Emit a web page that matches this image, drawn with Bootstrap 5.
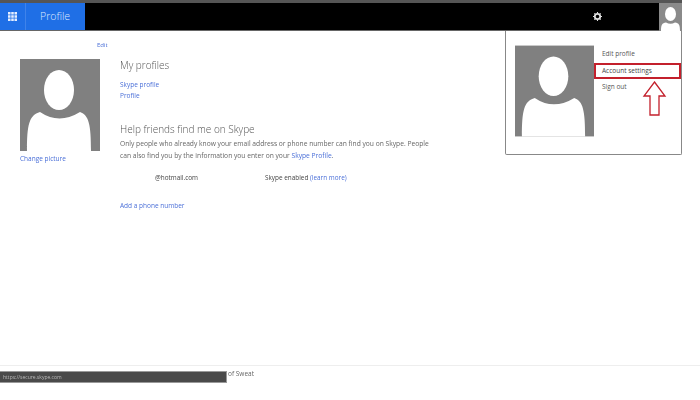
<!DOCTYPE html>
<html lang="en">

<head>
    <meta charset="UTF-8">
    <meta name="viewport" content="width=device-width, initial-scale=1.0">
    <title>Profile</title>
    <link href="https://cdn.jsdelivr.net/npm/bootstrap@5.3.3/dist/css/bootstrap.min.css" rel="stylesheet">
    <script src="https://cdn.jsdelivr.net/npm/bootstrap@5.3.3/dist/js/bootstrap.bundle.min.js"></script>
    <style>
        html, body { height: 100%; overflow: hidden; }
        body { font-family: "Open Sans", "Liberation Sans", sans-serif; background: #fff; }
        a { color: #4a6fd8; text-decoration: none; }

        #page { position: relative; width: 700px; height: 400px; filter: blur(.75px); }

        /* top bar */
        #topbar { width: 682px; height: 31px; background: #000; border-top: 3px solid #555; border-bottom: 1px solid #666; }
        #app-tile { width: 85px; background: #1f6fe6; color: #dfeaff; font-size: 10.5px; font-weight: 300; }
        #grid-btn { width: 26px; border-right: 1px solid #3f83ea; }
        #grid-icon { width: 9px; height: 9px; }
        #app-name { padding-left: 14px; }
        #gear-icon { width: 9px; height: 9px; margin-right: 57px; }
        #me-tile { width: 23px; height: 28px; background: #8a8a8a; }
        #me-tile svg { width: 23px; height: 28px; display: block; }

        /* page content */
        #content { padding: 10px 0 0 20px; }
        #left-col { width: 100px; flex: none; }
        #edit-link { display: block; font-size: 6px; line-height: 9px; margin-left: 77px; margin-bottom: 9px; }
        #big-avatar { width: 80px; height: 92px; display: block; }
        #change-pic { display: block; font-size: 6.5px; line-height: 10px; margin-top: 3px; }
        #right-col { padding-top: 17px; color: #555; width: 320px; }
        .sect-title { font-size: 10px; font-weight: 300; line-height: 15px; margin: 0; color: #555; }
        .side-link { display: block; font-size: 6.5px; line-height: 11px; }
        #links { margin-top: 6px; margin-bottom: 21px; }
        #help-text { font-size: 6.7px; line-height: 12px; margin: 1px 0 0; color: #666; width: 312px; }
        #contact-row { font-size: 6.4px; line-height: 10px; margin-top: 11px; padding-left: 35px; color: #444; }
        #contact-row span:first-child { width: 110px; }
        #add-phone { display: block; font-size: 6.5px; line-height: 10px; margin-top: 18px; }

        /* account menu */
        #acct-menu { position: absolute; left: 505px; top: 31px; width: 177px; height: 124px; background: #fff; border: 1px solid #888; border-top: 0; border-radius: 0 0 2px 2px; padding: 14px 0 0 9px; }
        #menu-avatar { width: 79px; height: 92px; flex: none; display: block; }
        .menu-line { font-size: 6.5px; line-height: 16px; padding-left: 8px; color: #555; }
        #menu-list { flex: 1; padding-top: 1px; }
        #menu-list .menu-line:first-child { height: 17px; }
        #acct-line { border: 2px solid #c3202c; line-height: 12px; padding-left: 6px; height: 16px; color: #444; }
        #red-arrow { position: absolute; left: 642px; top: 81px; width: 25px; height: 36px; }

        /* footer */
        #foot-line { position: absolute; left: 0; right: 0; top: 365px; border-top: 1px solid #eee; }
        #foot-text { position: absolute; left: 228px; top: 369px; font-size: 6.5px; line-height: 10px; color: #666; }
        #status-tip { position: absolute; left: 0; top: 371px; width: 227px; height: 12px; background: #4a4a4a; border: 1px solid #999; border-left: 0; color: #bbb; font-size: 5px; line-height: 10px; padding-left: 3px; }
    </style>
</head>

<body>
    <div id="page">
        <!-- Top bar -->
        <div id="topbar" class="d-flex align-items-stretch">
            <div id="app-tile" class="d-flex align-items-center">
                <div id="grid-btn" class="d-flex h-100 align-items-center justify-content-center">
                    <svg id="grid-icon" viewBox="0 0 10 10" fill="#e6efff">
                        <rect x="0" y="0" width="2.8" height="2.8"/><rect x="3.6" y="0" width="2.8" height="2.8"/><rect x="7.2" y="0" width="2.8" height="2.8"/>
                        <rect x="0" y="3.6" width="2.8" height="2.8"/><rect x="3.6" y="3.6" width="2.8" height="2.8"/><rect x="7.2" y="3.6" width="2.8" height="2.8"/>
                        <rect x="0" y="7.2" width="2.8" height="2.8"/><rect x="3.6" y="7.2" width="2.8" height="2.8"/><rect x="7.2" y="7.2" width="2.8" height="2.8"/>
                    </svg>
                </div>
                <span id="app-name">Profile</span>
            </div>
            <div class="ms-auto d-flex align-items-center">
                <svg id="gear-icon" viewBox="0 0 10 10">
                    <circle cx="5" cy="5" r="3" fill="none" stroke="#ddd" stroke-width="2"/>
                    <path d="M5 0v2M5 8v2M0 5h2M8 5h2M1.5 1.5l1.4 1.4M7.1 7.1l1.4 1.4M1.5 8.5l1.4-1.4M7.1 2.9l1.4-1.4" stroke="#ddd" stroke-width="1.2"/>
                </svg>
                <div id="me-tile">
                    <svg viewBox="0 0 23 28">
                        <ellipse cx="11.5" cy="11" rx="5.5" ry="7" fill="#fff"/>
                        <path d="M2 28C2 22 3 20 7 19.500Q11.500 22 16 19.500C20 20 21 22 21 28Z" fill="#fff"/>
                    </svg>
                </div>
            </div>
        </div>

        <!-- Profile content -->
        <div id="content" class="d-flex">
            <div id="left-col">
                <a id="edit-link" href="#">Edit</a>
                <svg id="big-avatar" viewBox="0 0 80 92">
                    <rect width="80" height="92" fill="#808080"/>
                    <ellipse cx="39" cy="31" rx="15" ry="20" fill="#fff"/>
                    <path d="M7 92C7 66 9 56 20 53Q39 66 60 53C69 56 71 66 71 92Z" fill="#fff"/>
                </svg>
                <a id="change-pic" href="#">Change picture</a>
            </div>
            <div id="right-col">
                <h2 class="sect-title">My profiles</h2>
                <div id="links">
                    <a class="side-link" href="#">Skype profile</a>
                    <a class="side-link" href="#">Profile</a>
                </div>
                <h2 class="sect-title">Help friends find me on Skype</h2>
                <p id="help-text">Only people who already know your email address or phone number can find you on Skype. People can also find you by the information you enter on your <a href="#">Skype Profile</a>.</p>
                <div id="contact-row" class="d-flex">
                    <span>@hotmail.com</span>
                    <span>Skype enabled <a href="#">(learn more)</a></span>
                </div>
                <a id="add-phone" href="#">Add a phone number</a>
            </div>
        </div>

        <!-- Account menu -->
        <div id="acct-menu" class="d-flex">
            <svg id="menu-avatar" viewBox="0 0 80 92">
                <rect width="80" height="92" fill="#808080"/>
                <ellipse cx="39" cy="31" rx="15" ry="20" fill="#fff"/>
                <path d="M7 92C7 66 9 56 20 53Q39 66 60 53C69 56 71 66 71 92Z" fill="#fff"/>
            </svg>
            <div id="menu-list">
                <div class="menu-line">Edit profile</div>
                <div class="menu-line" id="acct-line">Account settings</div>
                <div class="menu-line">Sign out</div>
            </div>
        </div>
        <svg id="red-arrow" viewBox="0 0 25 36">
            <path d="M12.500 1L23 15H17V34H8V15H2Z" fill="#fff" stroke="#c3202c" stroke-width="1.300"/>
        </svg>

        <!-- Footer and status tip -->
        <div id="foot-line"></div>
        <div id="foot-text">of Sweat</div>
        <div id="status-tip">https://secure.skype.com</div>
    </div>
</body>

</html>
